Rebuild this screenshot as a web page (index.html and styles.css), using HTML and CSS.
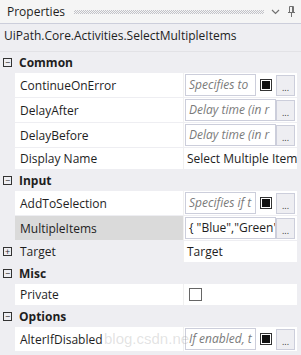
FILE: index.html
```html
<html>
    <head>
        <meta charset="utf-8">
        <title>Properties</title>
        <link rel="stylesheet" href="styles.css">
    </head>
    <body>
        <div class="panel">
            <div class="titlebar">
                <span class="title">Properties</span>
                <span class="grip"></span>
                <svg class="chev" width="9" height="6" viewBox="0 0 9 6"><path d="M1 1 L4.5 4.5 L8 1" fill="none" stroke="#717171" stroke-width="1.2"/></svg>
                <svg class="pin" width="9" height="13" viewBox="0 0 9 13"><path d="M2.5 1.5 H6.5 V7.5 M2.5 1.5 V7.5 M1 7.5 H8 M4.5 7.5 V12" fill="none" stroke="#717171" stroke-width="1"/><path d="M5.5 1.5 V7" stroke="#717171" stroke-width="1"/></svg>
            </div>
            <div class="typename">UiPath.Core.Activities.SelectMultipleItems</div>

            <div class="grid">
                <div class="cat"><span class="exp">−</span>Common</div>
                <div class="row tall">
                    <div class="name">ContinueOnError</div>
                    <div class="value">
                        <span class="box hint short">Specifies to</span>
                        <span class="chk on"></span>
                        <span class="btn">...</span>
                    </div>
                </div>
                <div class="row tall">
                    <div class="name">DelayAfter</div>
                    <div class="value">
                        <span class="box hint">Delay time (in r</span>
                        <span class="btn">...</span>
                    </div>
                </div>
                <div class="row tall">
                    <div class="name">DelayBefore</div>
                    <div class="value">
                        <span class="box hint">Delay time (in r</span>
                        <span class="btn">...</span>
                    </div>
                </div>
                <div class="row">
                    <div class="name">Display Name</div>
                    <div class="value"><span class="plain">Select Multiple Items</span></div>
                </div>

                <div class="cat"><span class="exp">−</span>Input</div>
                <div class="row tall">
                    <div class="name">AddToSelection</div>
                    <div class="value">
                        <span class="box hint short">Specifies if t</span>
                        <span class="chk on"></span>
                        <span class="btn">...</span>
                    </div>
                </div>
                <div class="row tall selected">
                    <div class="name">MultipleItems</div>
                    <div class="value">
                        <span class="box">{ "Blue","Green'</span>
                        <span class="btn">...</span>
                    </div>
                </div>
                <div class="row">
                    <div class="name sub"><span class="exp">+</span>Target</div>
                    <div class="value"><span class="plain">Target</span></div>
                </div>

                <div class="cat"><span class="exp">−</span>Misc</div>
                <div class="row">
                    <div class="name">Private</div>
                    <div class="value"><span class="chk empty"></span></div>
                </div>

                <div class="cat"><span class="exp">−</span>Options</div>
                <div class="row tall">
                    <div class="name">AlterIfDisabled</div>
                    <div class="value">
                        <span class="box hint short">If enabled, t</span>
                        <span class="chk on"></span>
                        <span class="btn">...</span>
                    </div>
                </div>
                <div class="mark">blog.csdn.ne</div>
            </div>
        </div>
    </body>
</html>
```

FILE: styles.css
```css
body{
    margin:0;
    font-family:"Open Sans","Noto Sans",sans-serif;
    font-size:12px;
    color:#1e1e1e;
    background:#eeeef2;
}

.panel{
    width:301px;
    height:355px;
    overflow:hidden;
    background:#eeeef2;
}

.titlebar{
    height:23px;
    display:flex;
    align-items:center;
    padding-left:7px;
    border-bottom:1px solid #cccedb;
    background:#f5f5f5;
}
.title{
    color:#1e1e1e;
}
.grip{
    width:190px;
    height:4px;
    margin-left:9px;
    background:repeating-conic-gradient(#c2c2c8 0 25%,transparent 0 50%) 0 0/2px 2px;
}
.chev{
    margin-left:7px;
}
.pin{
    margin-left:7px;
}

.typename{
    height:27px;
    line-height:24px;
    padding-left:4px;
    border-bottom:1px solid #e2e2e6;
}

.grid{
    position:relative;
    padding-right:4px;
}

.cat{
    height:21px;
    display:flex;
    align-items:center;
    font-weight:bold;
}

.exp{
    width:9px;
    height:9px;
    box-sizing:border-box;
    border:1px solid #333;
    margin:0 7px 0 3px;
    display:flex;
    align-items:center;
    justify-content:center;
    font-size:9px;
    line-height:7px;
    font-weight:normal;
}

.row{
    display:grid;
    grid-template-columns:168px 1fr;
    height:21px;
    margin:0 0 1px 15px;
    background:#fff;
}
.row.tall{
    height:24px;
}
.row.selected .name{
    background:#dadada;
}

.name{
    display:flex;
    align-items:center;
    padding-left:5px;
}
.name.sub{
    margin-left:-15px;
    padding-left:0;
    background:#eeeef2;
}
.name.sub .exp{
    margin-right:8px;
}

.value{
    display:flex;
    align-items:center;
    border-left:1px solid #f0f0f0;
    min-width:0;
}

.box{
    flex:1;
    min-width:0;
    height:22px;
    box-sizing:border-box;
    border:1px solid #cccedb;
    margin-left:1px;
    padding-left:3px;
    line-height:20px;
    white-space:nowrap;
    overflow:hidden;
}
.box.short{
    flex:0 0 71px;
}
.hint{
    font-style:italic;
    color:#7a7a7a;
}

.chk{
    width:12px;
    height:12px;
    box-sizing:border-box;
    border:1px solid #333;
    margin-left:4px;
}
.chk.on{
    padding:1px;
    background:#111 content-box;
}
.chk.empty{
    width:13px;
    height:13px;
    border-color:#666;
    margin-left:5px;
}

.btn{
    width:19px;
    height:21px;
    box-sizing:border-box;
    margin-left:auto;
    margin-right:2px;
    border:1px solid #cccedb;
    background:#eeeef2;
    font-size:9px;
    line-height:24px;
    text-align:center;
    color:#333;
}

.plain{
    padding-left:3px;
    white-space:nowrap;
    overflow:hidden;
}

.mark{
    position:absolute;
    left:104px;
    bottom:4px;
    font-family:"Liberation Sans",sans-serif;
    font-size:15px;
    color:rgba(160,160,160,0.3);
    white-space:nowrap;
    pointer-events:none;
}
```
